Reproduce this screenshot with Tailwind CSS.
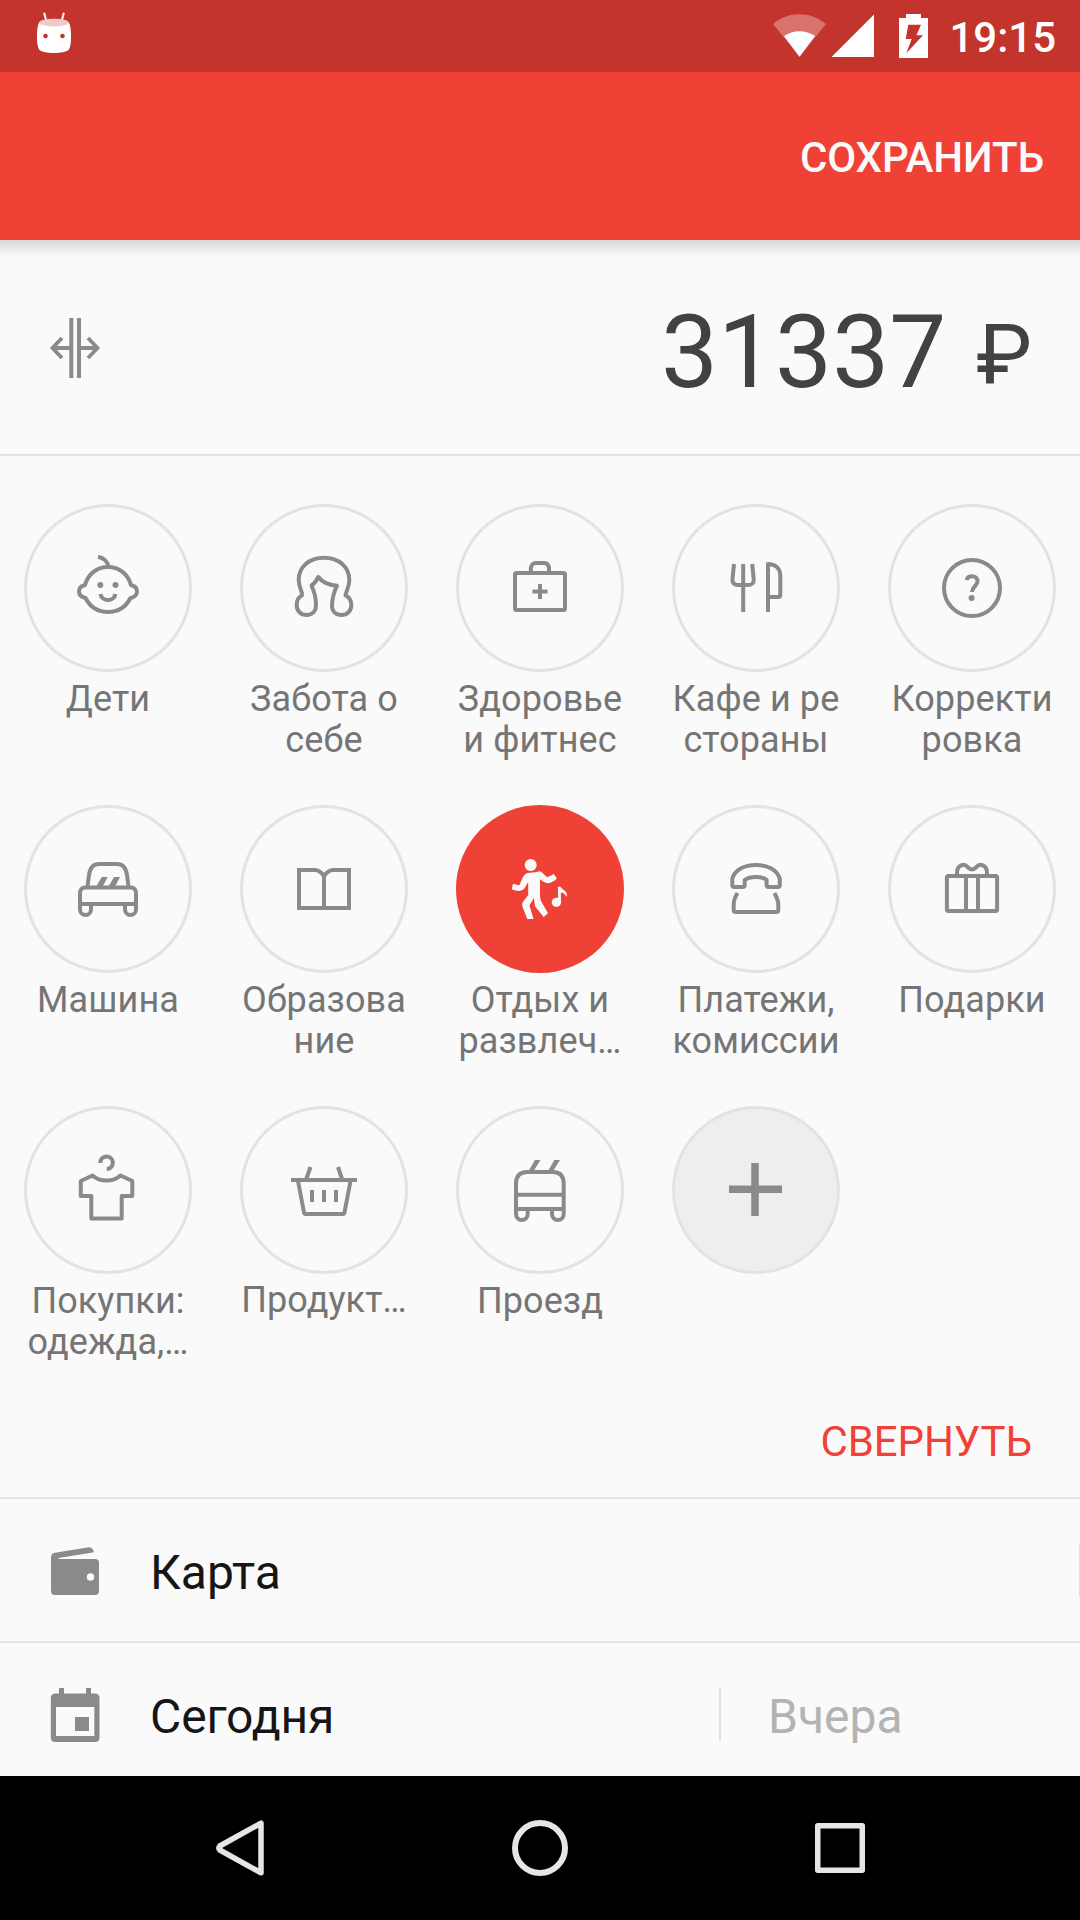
<!DOCTYPE html>
<html lang="ru">
<head>
<meta charset="utf-8">
<title>Расход</title>
<script src="https://cdn.jsdelivr.net/npm/@tailwindcss/browser@4"></script>
</head>
<body class="w-[1080px] h-[1920px] overflow-hidden bg-[#fafafa] font-['Roboto',sans-serif] flex flex-col">

<!-- Status bar -->
<div class="h-[72px] shrink-0 bg-[#c3342c] flex items-center pl-9 pr-6">
  <svg class="w-9 h-[72px]" viewBox="36 0 36 72">
    <path d="M44.3 13.5L46.3 21M63.7 13.5L61.7 21" stroke="#fff" stroke-width="2" stroke-linecap="round"/>
    <path d="M39.5 22C37.5 25 37 30 37 36C37 43 37.5 47 39.5 50C42 52 47 53 54 53S66 52 68.500 50C70.500 47 71 43 71 36C71 30 70.500 25 68.500 22Z" fill="#fff"/>
    <ellipse cx="54" cy="22.600" rx="14.700" ry="3.900" fill="#f0c8c6"/>
    <circle cx="45.500" cy="36" r="2.300" fill="#c3342c"/><circle cx="62.500" cy="36" r="2.300" fill="#c3342c"/>
  </svg>
  <div class="ml-auto flex items-center">
    <svg class="w-[54px] h-[72px]" viewBox="773 0 54 72">
      <path d="M799.500 56.700L773 24C788 11 811 11 826 24Z" fill="#d7726d"/>
      <path d="M799.500 56.700L784 36C793 29.500 806 29.500 815 36Z" fill="#fff"/>
    </svg>
    <svg class="ml-1 w-[44px] h-[72px]" viewBox="831 0 44 72"><path d="M831.500 57H874V14.500Z" fill="#fff"/></svg>
    <svg class="ml-6 w-[29px] h-[72px]" viewBox="899 0 29 72"><path fill="#fff" fill-rule="evenodd" d="M899 18H906V14H921V18H928V58H899ZM908.300 24.700L905.700 39H911.700L906.300 53.300L923 35.300H916.500L921 24.700Z"/></svg>
    <span class="w-[108px] mt-1 ml-5 text-[42px] leading-none font-medium text-white text-right">19:15</span>
  </div>
</div>

<!-- App bar -->
<header class="relative h-[168px] shrink-0 bg-[#f04137] flex items-center justify-end pr-9">
  <button class="mt-1 text-[42px] leading-[50px] font-medium tracking-[-0.1px] text-[#fafafa]">СОХРАНИТЬ</button>
  <div class="absolute inset-x-0 top-full h-4 bg-linear-to-b from-[#d6d6d6] to-[#fafafa]"></div>
</header>

<!-- Amount -->
<section class="h-[216px] shrink-0 border-b-2 border-[#e3e3e3] flex items-center justify-between pl-[45px] pr-12">
  <svg class="size-[60px] mt-0.5" viewBox="0 0 60 60" fill="none" stroke="#8a8a8a">
    <path d="M26.300 0V60M34 0V60" stroke-width="4"/>
    <path d="M25 30H7.500M17 20L7.500 30L17 40M35 30H52.500M43 20L52.500 30L43 40" stroke-width="3.800"/>
  </svg>
  <div class="mt-[18px] flex items-baseline text-[#424242]">
    <span class="text-[101.500px] leading-[120px]">31337</span>
    <span class="ml-[30px] text-[84px] leading-[120px] relative -top-1">₽</span>
  </div>
</section>

<!-- Categories -->
<section class="h-[1043px] shrink-0 border-b-2 border-[#e3e3e3] pt-12 flex flex-col">
  <div id="grid" class="grid grid-cols-5 auto-rows-[301px]"></div>
  <div class="mt-2.5 flex justify-end pr-12">
    <button class="text-[42px] leading-[50px] tracking-[-0.1px] text-[#f04137]">СВЕРНУТЬ</button>
  </div>
</section>

<!-- Account -->
<section class="h-[144px] shrink-0 border-b-2 border-[#e3e3e3] flex items-center pl-[51px]">
  <svg class="size-12 mt-0.5" viewBox="0 0 48 48" fill="#8a8a8a">
    <path d="M0 20V10.500Q0 6.500 4 5.800L38 .3Q41.500 .3 43 5.300L7.500 11V13Z"/>
    <path fill-rule="evenodd" d="M4 12H44Q48 12 48 16V44Q48 48 44 48H4Q0 48 0 44V16Q0 12 4 12ZM39.500 26.300a3.700 3.700 0 1 0 0 7.400a3.700 3.700 0 1 0 0-7.400Z"/>
  </svg>
  <span class="mt-1.5 ml-[51px] text-[48px] leading-[56px] text-[#161616]">Карта</span>
  <span class="ml-auto w-px h-[53px] bg-[#e0e0e0]"></span>
</section>

<!-- Date -->
<section class="h-[133px] shrink-0 flex pt-[45px] pl-[50px]">
  <svg class="w-[50px] h-[54px]" viewBox="0 0 50 54">
    <path fill="#8a8a8a" fill-rule="evenodd" d="M9 0H14V5.500H36V0H41V5.500H45Q49.500 5.500 49.500 10V49.500Q49.500 54 45 54H5.500Q.8 54 .8 49.500V10Q.8 5.500 5.500 5.500H9ZM6 19V48H44.300V19ZM25 29H39V43H25Z"/>
  </svg>
  <span class="mt-px ml-[50px] w-[569px] text-[48px] leading-[56px] tracking-[-0.1px] text-[#161616]">Сегодня</span>
  <span class="w-0.5 h-[53px] bg-[#e3e3e3]"></span>
  <span class="mt-px ml-[47px] text-[48px] leading-[56px] text-[#b3b3b3]">Вчера</span>
</section>

<!-- Navigation bar -->
<nav class="h-[144px] shrink-0 bg-black grid grid-cols-3 px-[90px] place-items-center">
  <svg class="size-[72px]" viewBox="0 0 72 72" fill="none" stroke="#e6e6e6" stroke-width="5.500" stroke-linejoin="round"><path d="M57 11.200V60.800L15.800 38Q14 36 15.800 34Z"/></svg>
  <svg class="size-[72px]" viewBox="0 0 72 72" fill="none" stroke="#e6e6e6" stroke-width="6"><circle cx="36" cy="36" r="25"/></svg>
  <svg class="size-[72px]" viewBox="0 0 72 72" fill="none" stroke="#e6e6e6" stroke-width="5.500" stroke-linejoin="round"><rect x="13.750" y="13.750" width="44.500" height="44.500"/></svg>
</nav>

<script>
const categories = [
  { lines: ['Дети'], icon: '<path d="M13 33C16 22 25 15 36 15S56 22 59 33C63 34 65 36 65 39.500S62 45.500 58.500 46C54 54.500 46 60 36 60S18 54.500 13.500 46C9 45 7 43 7 39.500S9 34 13 33Z"/><path d="M26 4.700C32 6 36 10 36.500 15"/><path d="M28.500 42C29.500 50 42.500 50 43.300 42"/><g fill="currentColor" stroke="none"><circle cx="28.300" cy="33" r="3"/><circle cx="43.500" cy="33" r="3"/></g>' },
  { lines: ['Забота о', 'себе'], icon: '<path d="M36 5.700C21 5.700 10.700 15 10.700 28C10.700 36 15 40 14 43.500C10.500 45 8.700 49 8.700 53C8.700 59 13 63 18.500 63C24.500 63 28 59 28 53C28 45 26 39 23.500 33.500C26.500 31.500 28.500 28.500 30.300 25C34 30 41 33 49 33.700C46 40 44 47 44 54C44 59.500 48 63 53.500 63C59 63 63.300 59 63.300 53C63.300 48.500 61 45 57.500 43.500C58 39 61.300 36 61.300 28C61.300 15 51 5.700 36 5.700Z"/>' },
  { lines: ['Здоровье', 'и фитнес'], icon: '<rect x="11" y="21" width="50" height="37" rx="1.500"/><path d="M26.800 20V17C26.800 13 29 11 32 11H40C43 11 45 13 45 17V20M36 32V47M28.400 39.500H43.600"/>' },
  { lines: ['Кафе и ре', 'стораны'], icon: '<path d="M14 12L12.500 27C12.200 31 14.500 33 18 33H28.500C32 33 34 31 33.700 27L32.200 12M23.200 12V60M48 60V12C55.500 12 60.300 16.500 60.300 24V43Q60.300 45 58.300 45H48"/>' },
  { lines: ['Корректи', 'ровка'], icon: '<circle cx="36" cy="36" r="28"/><path d="M30.500 28C31.500 24.500 34 24.300 36 24.300C39.500 24.300 41.500 26.500 41.500 29.500C41.500 33.500 36 35 36 40"/><circle cx="35.600" cy="46" r="3" fill="currentColor" stroke="none"/>' },
  { lines: ['Машина'], icon: '<path d="M15.500 33.500L17 22C18 15 21 11 27 11H45C51 11 54 15 55 22L56.500 33.500M8 51V40C8 37 10 34.500 13 34.500H59C62 34.500 64 37 64 40V51ZM8 51V56.500A5.500 5.500 0 0 0 19 56.500V51M53 51V56.500A5.500 5.500 0 0 0 64 56.500V51"/><path fill="currentColor" stroke="none" d="M29.700 24H35.700L31 33H24.500ZM42 24H48L43.300 33H36.800Z"/>' },
  { lines: ['Образова', 'ние'], icon: '<path stroke-linejoin="miter" d="M36 55V23C33.500 19.500 30.500 17 27 17H11V55H61V17H45C41.500 17 38.500 19.500 36 23"/>' },
  { lines: ['Отдых и', 'развлеч…'], active: true, icon: '<g fill="currentColor" stroke="none"><circle cx="26.700" cy="12" r="6"/><path d="M23 20Q30 20 36 18.300Q38 19 39.500 21L43.100 24.300Q46 22.500 47.500 22.500L49.400 20.700L52.800 25Q51.500 27.500 49.800 28Q46 30.500 43.100 30.300Q40 29.500 36 26.300V43.700L37 48L44 60.300L39.700 64L31.500 54Q30.500 52 30 44.700L25.400 52.500L29.600 66H23.300L18.200 53Q18 51 18.500 49.500L24.200 42V29L20.500 35.300Q18.500 38 15.300 38Q11 38 7.800 36.300L9 30.700L13 31.700Q15 33 15.700 31.500L18.500 25Q20 21.500 23 20Z"/><ellipse cx="52.400" cy="49.300" rx="4.700" ry="4.600"/><path d="M54 33.700H56.600C58 37 63 37 63 43L62.500 43.700C61 41 59 39.500 56.900 39.500V49.500H54Z"/></g>' },
  { lines: ['Платежи,', 'комиссии'], icon: '<path d="M12.300 32V25.500C15 17 24 12 36 12S57 17 59.800 25.500V32Q59.800 34 57.800 34H48.600Q46.600 34 46.600 32V27C44 24.500 40 24 36 24S28 24.500 24.700 27V32Q24.700 34 22.700 34H14.300Q12.300 34 12.300 32ZM17.500 40C14.500 45 13.700 48 13.700 51V57Q13.700 59 15.700 59H56.300Q58.300 59 58.300 57V51C58.300 48 57 45 54.500 40"/>' },
  { lines: ['Подарки'], icon: '<rect x="10.900" y="23" width="50.200" height="35" rx="1.500"/><path d="M30 23V58M42 23V58M21 23V20C21 11.500 28.500 10 31.500 14C33.500 16 34.500 16.500 36 16.500S38.500 16 40.500 14C43.500 10 51 11.500 51 20V23"/>' },
  { lines: ['Покупки:', 'одежда,…'], icon: '<path d="M28.300 9A6.300 6.300 0 1 1 34.700 15M20.500 21.500L8.800 27V42H19.300V64.500H49.700V42H60.300V27L48.500 21.500C41 28.300 28 28.300 20.500 21.500Z"/>' },
  { lines: ['Продукт…'], raised: true, icon: '<path d="M3 26H69M10 27L16 58.500Q16.500 60 18.500 60H54Q56 60 56.500 58.500L62.500 27M24 36V48M36 36V48M48 36V48M22.500 13L18.300 25M50 13L54 25"/>' },
  { lines: ['Проезд'], icon: '<path d="M12 60V30C12 22 16 18 23 18H49C56 18 59.700 22 59.700 30V60M12 40.700H59.700M12 55H59.700M12 60A5.800 6 0 0 0 23.700 60V55M48 55V60A5.800 6 0 0 0 59.700 60"/><path fill="currentColor" stroke="none" d="M31 6H36.500L29 18H24ZM50.300 6H56L48.500 18H43.500Z"/>' },
  { lines: [], add: true, icon: '<path stroke-width="7.500" d="M35 9V62M9 35.200H62"/>' }
];
document.getElementById('grid').innerHTML = categories.map(c => {
  const skin = c.active ? 'bg-[#f04137] text-[#fafafa]'
    : c.add ? 'bg-[#eeeeee] border-3 border-[#e3e3e3] text-[#8a8a8a]'
    : 'border-3 border-[#e3e3e3] text-[#8a8a8a]';
  return `<div class="flex flex-col items-center">
    <div class="size-[168px] rounded-full flex items-center justify-center ${skin}">
      <svg class="size-[72px]" viewBox="0 0 72 72" fill="none" stroke="currentColor" stroke-width="4" stroke-linejoin="round">${c.icon}</svg>
    </div>
    <div class="${c.raised ? 'mt-1.5' : 'mt-[7px]'} text-[36px] leading-[41px] tracking-[0.1px] text-[#757575] text-center whitespace-nowrap">${c.lines.join('<br>')}</div>
  </div>`;
}).join('');
</script>
</body>
</html>
